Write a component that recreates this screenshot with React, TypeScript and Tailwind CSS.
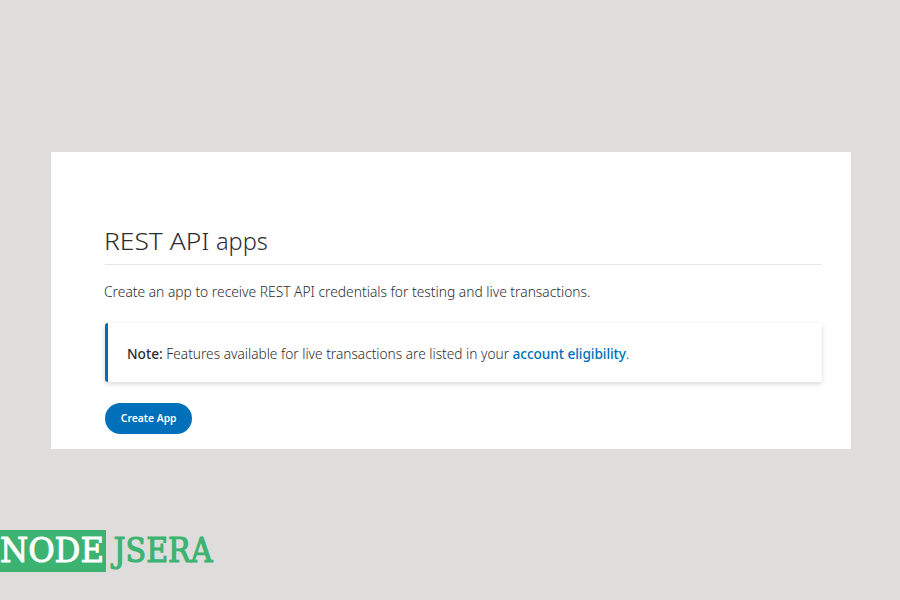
export default function App() {
  return (
    <main className="flex h-[600px] w-[900px] flex-col overflow-hidden bg-[#dedddc] pt-[152px] font-['Noto_Sans','Open_Sans',sans-serif]">
      <section className="ml-[51px] h-[297px] w-[800px] shrink-0 bg-white pt-[72px] pr-[29px] pl-[54px]">
        <h1 className="flex h-[41px] border-b border-[#e6e6e6] text-[24px] leading-[34px] font-light whitespace-nowrap text-[#2c2e2f]">
          <span className="-ml-px inline-block w-[112px] origin-left scale-x-[1.1]">REST API </span>
          <span className="inline-block origin-left scale-x-[0.98]">apps</span>
        </h1>
        <p className="mt-[15px] h-[23px] text-[14.5px] leading-[22px] font-light whitespace-nowrap text-[#2c2e2f]">
          <span className="-ml-px inline-block origin-left scale-x-[0.952]">
            Create an app to receive REST API credentials for testing and live transactions.
          </span>
        </p>
        <div className="mt-[20px] flex h-[59px] items-center rounded-[3px] border-l-[3px] border-[#006abb] bg-white pt-[2px] pl-[19px] text-[14.5px] whitespace-nowrap shadow-[0_2px_5px_rgba(0,0,0,0.16)]">
          <p className="inline-block origin-left scale-x-[0.944] font-light text-[#2c2e2f]">
            <b className="font-medium">Note:</b> Features available for live transactions are listed in your{' '}
            <a className="font-medium tracking-[-0.1px] text-[#0070ba]">account eligibility</a>.
          </p>
        </div>
        <button className="mt-[21px] flex h-[31px] w-[87px] items-center justify-center rounded-full bg-[#0070ba] text-[11px] font-semibold whitespace-nowrap text-white">
          <span className="inline-block scale-x-[0.94]">Create App</span>
        </button>
      </section>
      <svg className="mt-[76px] shrink-0" width="230" height="52" viewBox="0 -5 230 52" fontFamily="DejaVu Serif, serif">
        <rect width="106" height="42" fill="#3cb371" />
        <text x="0" y="31.7" fontSize="33" fill="#fff" stroke="#fff" strokeWidth="1" textLength="104" lengthAdjust="spacingAndGlyphs">
          NODE
        </text>
        <text x="113.5" y="31.7" fontSize="33" fill="#3cb371" stroke="#3cb371" strokeWidth="1.2" textLength="99" lengthAdjust="spacingAndGlyphs">
          JSERA
        </text>
      </svg>
    </main>
  )
}
